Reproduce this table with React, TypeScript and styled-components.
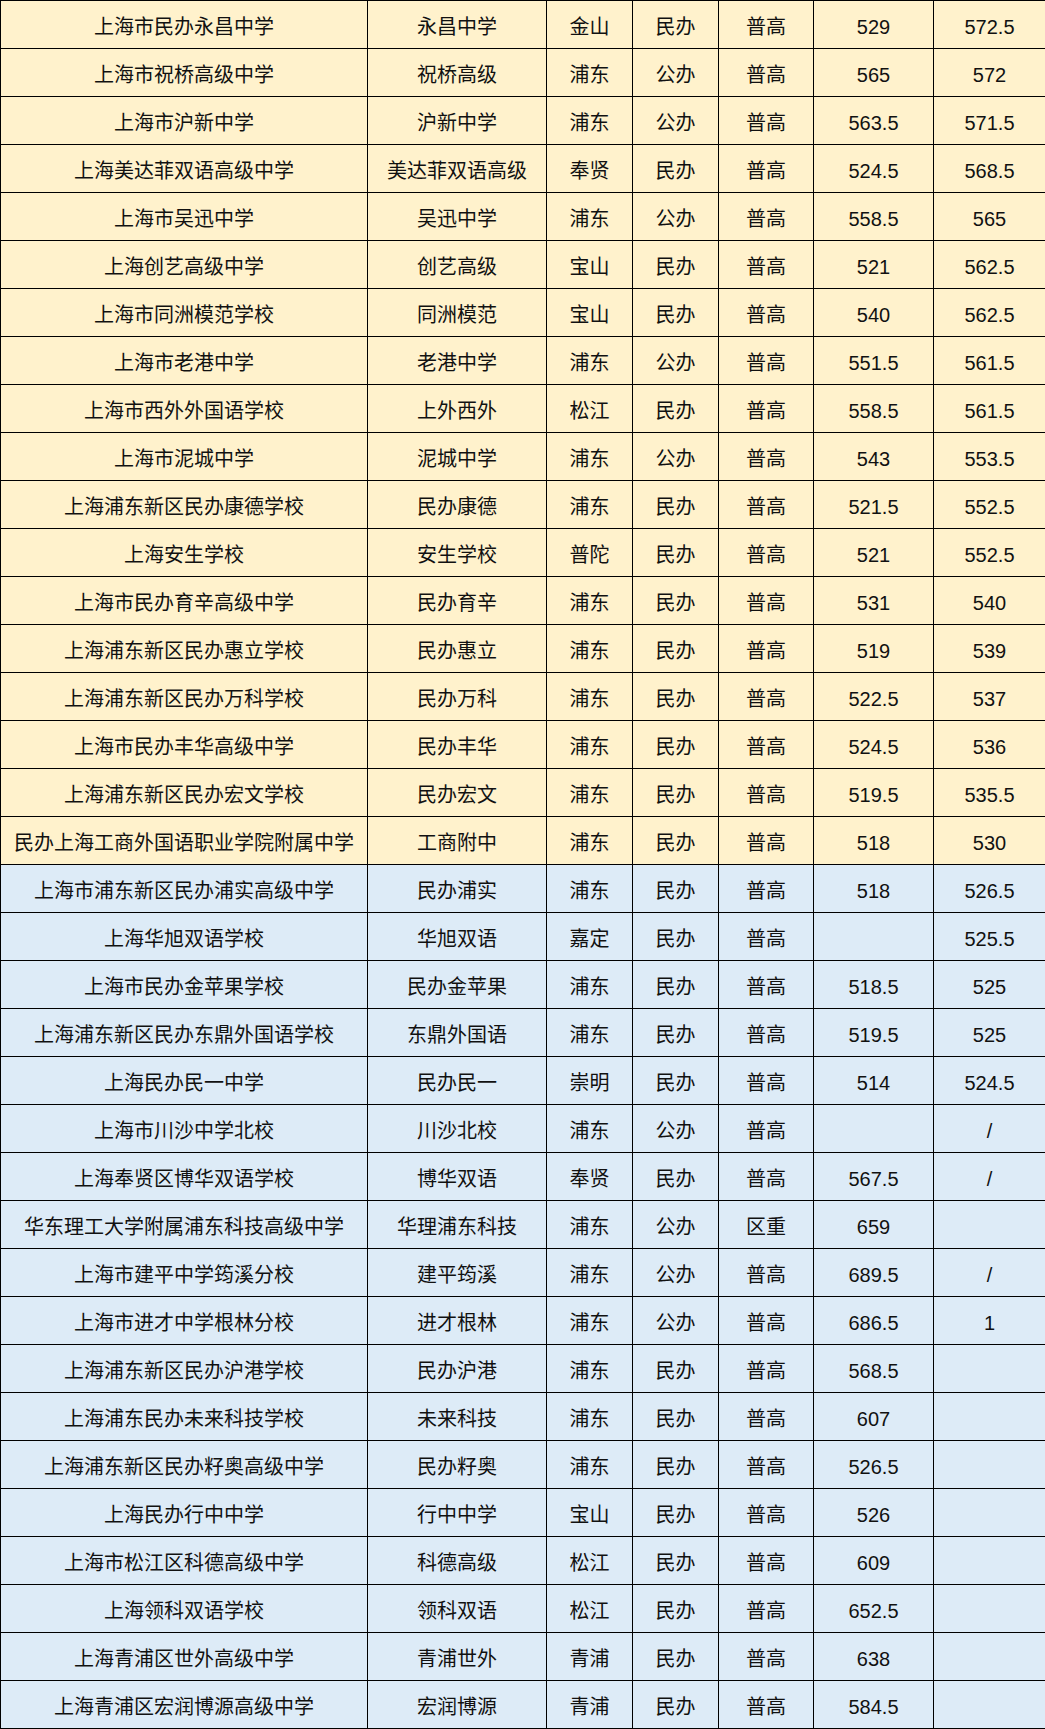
import React from "react";
import styled, { createGlobalStyle } from "styled-components";

const Global = createGlobalStyle`
  html, body { margin: 0; padding: 0; background: #fff; }
  body { font-family: "Liberation Sans", "Noto Sans CJK SC", sans-serif; }
`;

type Row = [string, string, string, string, string, string, string];

const rows: Row[] = [
  ["上海市民办永昌中学", "永昌中学", "金山", "民办", "普高", "529", "572.5"],
  ["上海市祝桥高级中学", "祝桥高级", "浦东", "公办", "普高", "565", "572"],
  ["上海市沪新中学", "沪新中学", "浦东", "公办", "普高", "563.5", "571.5"],
  ["上海美达菲双语高级中学", "美达菲双语高级", "奉贤", "民办", "普高", "524.5", "568.5"],
  ["上海市吴迅中学", "吴迅中学", "浦东", "公办", "普高", "558.5", "565"],
  ["上海创艺高级中学", "创艺高级", "宝山", "民办", "普高", "521", "562.5"],
  ["上海市同洲模范学校", "同洲模范", "宝山", "民办", "普高", "540", "562.5"],
  ["上海市老港中学", "老港中学", "浦东", "公办", "普高", "551.5", "561.5"],
  ["上海市西外外国语学校", "上外西外", "松江", "民办", "普高", "558.5", "561.5"],
  ["上海市泥城中学", "泥城中学", "浦东", "公办", "普高", "543", "553.5"],
  ["上海浦东新区民办康德学校", "民办康德", "浦东", "民办", "普高", "521.5", "552.5"],
  ["上海安生学校", "安生学校", "普陀", "民办", "普高", "521", "552.5"],
  ["上海市民办育辛高级中学", "民办育辛", "浦东", "民办", "普高", "531", "540"],
  ["上海浦东新区民办惠立学校", "民办惠立", "浦东", "民办", "普高", "519", "539"],
  ["上海浦东新区民办万科学校", "民办万科", "浦东", "民办", "普高", "522.5", "537"],
  ["上海市民办丰华高级中学", "民办丰华", "浦东", "民办", "普高", "524.5", "536"],
  ["上海浦东新区民办宏文学校", "民办宏文", "浦东", "民办", "普高", "519.5", "535.5"],
  ["民办上海工商外国语职业学院附属中学", "工商附中", "浦东", "民办", "普高", "518", "530"],
  ["上海市浦东新区民办浦实高级中学", "民办浦实", "浦东", "民办", "普高", "518", "526.5"],
  ["上海华旭双语学校", "华旭双语", "嘉定", "民办", "普高", "", "525.5"],
  ["上海市民办金苹果学校", "民办金苹果", "浦东", "民办", "普高", "518.5", "525"],
  ["上海浦东新区民办东鼎外国语学校", "东鼎外国语", "浦东", "民办", "普高", "519.5", "525"],
  ["上海民办民一中学", "民办民一", "崇明", "民办", "普高", "514", "524.5"],
  ["上海市川沙中学北校", "川沙北校", "浦东", "公办", "普高", "", "/"],
  ["上海奉贤区博华双语学校", "博华双语", "奉贤", "民办", "普高", "567.5", "/"],
  ["华东理工大学附属浦东科技高级中学", "华理浦东科技", "浦东", "公办", "区重", "659", ""],
  ["上海市建平中学筠溪分校", "建平筠溪", "浦东", "公办", "普高", "689.5", "/"],
  ["上海市进才中学根林分校", "进才根林", "浦东", "公办", "普高", "686.5", "1"],
  ["上海浦东新区民办沪港学校", "民办沪港", "浦东", "民办", "普高", "568.5", ""],
  ["上海浦东民办未来科技学校", "未来科技", "浦东", "民办", "普高", "607", ""],
  ["上海浦东新区民办籽奥高级中学", "民办籽奥", "浦东", "民办", "普高", "526.5", ""],
  ["上海民办行中中学", "行中中学", "宝山", "民办", "普高", "526", ""],
  ["上海市松江区科德高级中学", "科德高级", "松江", "民办", "普高", "609", ""],
  ["上海领科双语学校", "领科双语", "松江", "民办", "普高", "652.5", ""],
  ["上海青浦区世外高级中学", "青浦世外", "青浦", "民办", "普高", "638", ""],
  ["上海青浦区宏润博源高级中学", "宏润博源", "青浦", "民办", "普高", "584.5", ""],
];

const widths = [367, 179, 86, 86, 95, 120, 112];

const Table = styled.table`
  width: 1045px;
  table-layout: fixed;
  border-collapse: collapse;
  color: #111;
  font-size: 20px;
`;

const Tr = styled.tr<{ $tone: "yellow" | "blue" }>`
  height: 48px;
  background: ${(p) => (p.$tone === "yellow" ? "#FFF2CC" : "#DDEBF7")};
`;

const Td = styled.td`
  border: 1.5px solid #000;
  padding: 5px 0 0 0;
  text-align: center;
  vertical-align: middle;
  white-space: nowrap;
  line-height: 1;
`;

export default function App() {
  return (
    <>
      <Global />
      <Table>
        <colgroup>
          {widths.map((w, i) => (
            <col key={i} style={{ width: w }} />
          ))}
        </colgroup>
        <tbody>
          {rows.map((r, i) => (
            <Tr key={i} $tone={i < 18 ? "yellow" : "blue"}>
              {r.map((c, j) => (
                <Td key={j}>{c}</Td>
              ))}
            </Tr>
          ))}
        </tbody>
      </Table>
    </>
  );
}
